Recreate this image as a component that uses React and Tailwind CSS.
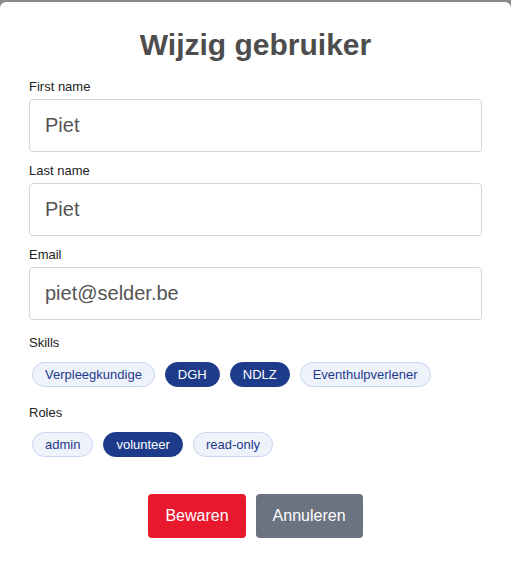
import React, { useState } from 'react';

const skills = ['Verpleegkundige', 'DGH', 'NDLZ', 'Eventhulpverlener'];
const roles = ['admin', 'volunteer', 'read-only'];

const Chip = ({ label, active, onClick }) => (
  <button
    type="button"
    onClick={onClick}
    className={
      active
        ? 'px-3 py-[4px] rounded-full border border-[#1e3a8a] bg-[#1e3a8a] text-white text-[13px] leading-[15px]'
        : 'px-3 py-[4px] rounded-full border border-[#c9d5f0] bg-[#eef2fb] text-[#1e3a8a] text-[13px] leading-[15px]'
    }
  >
    {label}
  </button>
);

const Field = ({ label, value, onChange }) => (
  <div className="mb-[11px]">
    <label className="block text-[13px] leading-4 text-[#222] mb-1">{label}</label>
    <input
      value={value}
      onChange={(e) => onChange(e.target.value)}
      className="w-full h-[53px] px-[15px] rounded border border-[#d6d6d6] bg-white text-[20px] text-[#555] outline-none"
    />
  </div>
);

export default function App() {
  const [first, setFirst] = useState('Piet');
  const [last, setLast] = useState('Piet');
  const [email, setEmail] = useState('piet@selder.be');
  const [activeSkills, setActiveSkills] = useState(['DGH', 'NDLZ']);
  const [activeRoles, setActiveRoles] = useState(['volunteer']);

  const toggle = (list, setList, item) =>
    setList(list.includes(item) ? list.filter((x) => x !== item) : [...list, item]);

  return (
    <div
      className="h-[561px] overflow-hidden bg-[#8a8a8a] pt-[2px]"
      style={{ fontFamily: '"Liberation Sans", Arial, sans-serif' }}
    >
      <div className="bg-white rounded-md min-h-[600px] px-[29px] pt-[25px]">
        <h1 className="text-center text-[30px] leading-9 font-bold text-[#4d4d4d] mb-4">
          Wijzig gebruiker
        </h1>

        <Field label="First name" value={first} onChange={setFirst} />
        <Field label="Last name" value={last} onChange={setLast} />
        <Field label="Email" value={email} onChange={setEmail} />

        {/* margin collapses with the field's mb-[11px] */}
        <div className="mt-[15px]">
          <div className="text-[13px] leading-4 text-[#222]">Skills</div>
          <div className="flex flex-wrap gap-[10px] pl-[3px] mt-[11px]">
            {skills.map((s) => (
              <Chip
                key={s}
                label={s}
                active={activeSkills.includes(s)}
                onClick={() => toggle(activeSkills, setActiveSkills, s)}
              />
            ))}
          </div>
        </div>

        <div className="mt-[18px]">
          <div className="text-[13px] leading-4 text-[#222]">Roles</div>
          <div className="flex flex-wrap gap-[10px] pl-[3px] mt-[11px]">
            {roles.map((r) => (
              <Chip
                key={r}
                label={r}
                active={activeRoles.includes(r)}
                onClick={() => toggle(activeRoles, setActiveRoles, r)}
              />
            ))}
          </div>
        </div>

        <div className="flex justify-center gap-[10px] mt-[37px]">
          <button className="h-[44px] px-[17px] rounded bg-[#e8192f] text-white text-base">
            Bewaren
          </button>
          <button className="h-[44px] px-[17px] rounded bg-[#6b7280] text-white text-base">
            Annuleren
          </button>
        </div>
      </div>
    </div>
  );
}
